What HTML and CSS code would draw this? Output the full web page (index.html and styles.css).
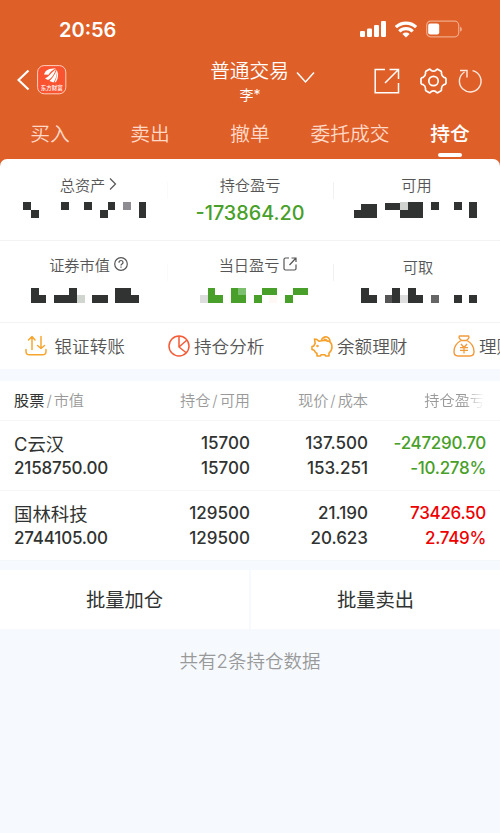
FILE: index.html
```
<!DOCTYPE html>
<html lang="zh-CN">
<head>
<meta charset="utf-8">
<title>普通交易</title>
<link rel="stylesheet" href="styles.css">
</head>
<body>
<div class="header">
    <div class="status">
        <span class="time">20:56</span>
        <div class="status-icons">
            <svg width="27" height="18" viewBox="0 0 27 18" fill="#fff">
                <rect x="0" y="11" width="5" height="6" rx="1.2"/>
                <rect x="7" y="8.500" width="5" height="8.500" rx="1.200"/>
                <rect x="14" y="5" width="5" height="12" rx="1.200"/>
                <rect x="21" y="1" width="5" height="16" rx="1.200"/>
            </svg>
            <svg width="24" height="18" viewBox="1 0 24 18" fill="none" stroke="#fff" stroke-width="3.200">
                <path d="M1.900 7.200a14.800 14.800 0 0 1 20.200 0M5.300 11.300a9.600 9.600 0 0 1 13.400 0"/>
                <path d="M8.400 13.900a5.200 5.200 0 0 1 7.200 0L12 17.400z" fill="#fff" stroke="none"/>
            </svg>
            <svg width="37" height="18" viewBox="0 0 37 18">
                <rect x=".7" y="1.200" width="32" height="15.600" rx="4" fill="none" stroke="#f0a987" stroke-width="1.200"/>
                <rect x="2.200" y="3.500" width="11" height="11" rx="2" fill="#fff"/>
                <path d="M34 6.500q2 1 2 2.700t-2 2.600z" fill="#f0a987"/>
            </svg>
        </div>
    </div>
    <div class="navbar">
        <div class="nav-left">
            <svg width="13" height="22" viewBox="0 0 13 22" fill="none" stroke="#fff" stroke-width="2.200"><path d="M11.500 1.500L1.500 11l10 9.500"/></svg>
            <svg class="logo" width="30" height="30" viewBox="0 0 30 30">
                <rect x=".6" y=".6" width="28.200" height="28.200" rx="6.500" fill="#fa5330" stroke="#ffd0bd" stroke-width="1"/>
                <path d="M7 9.500C8.500 5 12 3.500 19 3.300 16 4.500 13 7 11.500 9.800zM8 13.500c3.500-1.500 6-5.500 11-9.500-1.500 4.500-4 9.500-8 11zM12.500 16c3.500-3 5.500-7 7.500-11.500.2 5-1 9.500-3.500 13zM17.500 17.500c2.200-4 2.700-8 3-12 1.300 4 .5 8.500-1.500 11.500z" fill="#fff"/>
                <text x="14.700" y="25" text-anchor="middle" textLength="22" class="logo-text">东方财富</text>
            </svg>
        </div>
        <div class="nav-title">
            <div class="title">普通交易
                <svg width="19" height="13" viewBox="0 0 19 13" fill="none" stroke="#fff" stroke-width="1.500"><path d="M1 1.500l8.500 9.500L18 1.500"/></svg>
            </div>
            <div class="user">李*</div>
        </div>
        <div class="nav-right">
            <svg width="26" height="26" viewBox="0 0 26 26" fill="none" stroke="#fff" stroke-width="1.500"><path d="M11 1.500H1.200v23.300h23.300V15M15.500 1.500h9V11M24.500 1.500L11 15"/></svg>
            <svg width="27" height="26" viewBox="0 0 27 26" fill="none" stroke="#fff" stroke-width="1.700" stroke-linejoin="round">
                <path d="M9.400 1.200q1.200 0 1.800 1.200 2.300 1.400 4.600 0 .6-1.200 1.800-1.200l3.500 2q.8 1 .3 2 .2 3 2.600 4.200 1.600 0 2 1.300v4.600q-.4 1.300-2 1.300-2.400 1.200-2.600 4.200.5 1-.3 2l-3.500 2q-1.200 0-1.800-1.200-2.300-1.400-4.600 0-.6 1.200-1.800 1.200l-3.500-2q-.8-1-.3-2-.2-3-2.600-4.200-1.600 0-2-1.300v-4.600q.4-1.300 2-1.300 2.400-1.200 2.600-4.200-.5-1 .3-2z"/>
                <circle cx="13.500" cy="13" r="4.700"/>
            </svg>
            <svg width="24" height="25" viewBox="0 0 24 25" fill="none" stroke="#ffe9df" stroke-width="1.400"><path d="M14.500 2.600A10.800 10.800 0 1 1 6.500 4M2 2.500h7v7"/></svg>
        </div>
    </div>
    <div class="tabs">
        <div class="tab">买入</div>
        <div class="tab">卖出</div>
        <div class="tab">撤单</div>
        <div class="tab">委托成交</div>
        <div class="tab active">持仓</div>
    </div>
</div>

<div class="summary-wrap">
    <div class="summary">
        <div class="cell">
            <div class="label shift">总资产<svg width="8" height="14" viewBox="0 0 8 14" fill="none" stroke="#555" stroke-width="1.200"><path d="M1 1.500L6.500 7 1 12.500"/></svg></div>
            <svg class="mask" width="167" height="16" viewBox="0 0 167 16"><path d="M23 0h8v8h8v8h-8V8h-8zM61 0h8v8h-8zM84 0h8v8h-8zM108 0h7v8h-7v8h-8V8h8zM139 0h7v16h-7z"/><path fill="#8e8c90" d="M123 0h8v8h-8z"/></svg>
        </div>
        <div class="cell">
            <div class="label">持仓盈亏</div>
            <div class="amount">-173864.20</div>
        </div>
        <div class="cell">
            <div class="label">可用</div>
            <svg class="mask" width="167" height="16" viewBox="333 0 167 16"><path d="M361 2h16v14h-23V8h7zM385 1h15v7h8V0h15v16h-23V8h-15zM431 0h8v8h-8zM454 0h8v8h-8zM469 0h8v16h-8z"/><path fill="#d0d2d0" d="M400 0h8v8h-8z"/></svg>
        </div>
    </div>
    <div class="summary second">
        <div class="cell">
            <div class="label shift">证券市值<svg width="14" height="14" viewBox="0 0 14 14" fill="none" stroke="#555" stroke-width="1.200"><circle cx="7" cy="7" r="6.300"/><path d="M5 5.700q0-2.200 2-2.200t2 1.900q0 1-1 1.600-1 .6-1 1.400M7 9.500v1.200"/></svg></div>
            <svg class="mask" width="167" height="15" viewBox="0 0 167 15"><path d="M31 0h8v7h7v8H31zM54 7h15V0h8v15H54zM92 7h16v8H92zM115 0h16v7h8v8h-24z"/><path fill="#d0d5d0" d="M77 7h8v8h-8z"/></svg>
        </div>
        <div class="cell">
            <div class="label shift-more">当日盈亏<svg width="14" height="14" viewBox="0 0 14 14" fill="none" stroke="#555" stroke-width="1.200"><path d="M6 1H2.500Q1 1 1 2.500v9Q1 13 2.500 13h9q1.500 0 1.500-1.500V7.500M8.500 1H13v4M13 1L6.500 8"/></svg></div>
            <svg class="mask green" width="166" height="15" viewBox="167 0 166 15"><path d="M208 0h7v7h8v8h-15zM231 0h7v7h8v8h-15zM254 7h8V0h15v7h-15v8h-8zM285 7h8V0h15v7h-15v8h-8z"/><path fill="#7bbf6f" d="M238 0h8v7h-8z"/><path fill="#ddd" d="M200 7h8v8h-8z"/><path fill="#fff8f4" d="M269 7h8v8h-8z"/></svg>
        </div>
        <div class="cell">
            <div class="label low">可取</div>
            <svg class="mask" width="167" height="15" viewBox="333 0 167 15"><path d="M361 0h8v7h8v8h-16zM392 0h8v15h-8zM408 0h8v7h7v8h-15zM454 7h8v8h-8zM469 7h8v8h-8z"/><path fill="#555" d="M385 7h7v8h-7z"/><path fill="#666" d="M431 7h8v8h-8z"/><path fill="#dedede" d="M400 7h8v8h-8z"/></svg>
        </div>
    </div>
</div>

<div class="quick">
    <div class="quick-item">
        <svg width="22" height="22" viewBox="0 0 22 22" fill="none" stroke="#f6a62f" stroke-width="1.500" stroke-linecap="round" stroke-linejoin="round"><path d="M1 14.500v2q0 3.300 3.500 3.300h13q3.500 0 3.500-3.300v-2M7 14.500V1.500M3.500 5L7 1.500 10 5M16 1.500v12M12.500 10.500l3.500 3 3.500-3"/></svg>
        <span>银证转账</span>
    </div>
    <div class="quick-item">
        <svg width="22" height="22" viewBox="0 0 22 22" fill="none" stroke="#f45b36" stroke-width="1.500"><circle cx="11" cy="11" r="10"/><path d="M11 1v11l7.500 6M11 12l8-7"/></svg>
        <span>持仓分析</span>
    </div>
    <div class="quick-item">
        <svg width="22" height="22" viewBox="0 0 22 22" fill="none" stroke="#f6a02a" stroke-width="1.600" stroke-linejoin="round"><path d="M10.500 5a4.200 4.200 0 1 1 8.300 2.500M12.500 4.500q3-1 4 2.500M8 6.200Q6 4 3.500 4l.7 4.500Q3 10 2.800 11L1 11.500v3l2.200.8q1 2 2.800 3.200V21h3.500l.5-1.200h4l.5 1.200H18v-3q3-2.500 3-6 0-6.500-7-6.500-4 0-6 .7z"/><circle cx="6.500" cy="11" r=".5"/></svg>
        <span>余额理财</span>
    </div>
    <div class="quick-item">
        <svg width="22" height="22" viewBox="0 0 22 22" fill="none" stroke="#f29a3c" stroke-width="1.400" stroke-linejoin="round"><path d="M6.500 1h9q1 1.500 0 2.500l-2 2h-5l-2-2Q5.500 2.500 6.500 1zM8 5.500C3.500 8 1 12 1 16.500 1 20 2.500 21 5 21h12c2.500 0 4-1 4-4.500 0-4.500-2.500-8.500-7-11"/><path stroke-width="1.300" d="M8 9l3 3.500L14 9M11 12.500v6M7 12.700h8M7 15.300h8"/></svg>
        <span>理财</span>
    </div>
</div>

<div class="holdings">
    <div class="row head">
        <div class="col"><b>股票</b><i>/</i>市值</div>
        <div class="col">持仓<i>/</i>可用</div>
        <div class="col">现价<i>/</i>成本</div>
        <div class="col fade">持仓盈亏</div>
    </div>
    <div class="row">
        <div class="col"><div class="name">C云汉</div><div>2158750.00</div></div>
        <div class="col"><div>15700</div><div>15700</div></div>
        <div class="col"><div>137.500</div><div>153.251</div></div>
        <div class="col down"><div>-247290.70</div><div>-10.278%</div></div>
    </div>
    <div class="row">
        <div class="col"><div class="name">国林科技</div><div>2744105.00</div></div>
        <div class="col"><div>129500</div><div>129500</div></div>
        <div class="col"><div>21.190</div><div>20.623</div></div>
        <div class="col up"><div>73426.50</div><div>2.749%</div></div>
    </div>
</div>

<div class="actions">
    <div class="action">批量加仓</div>
    <div class="action">批量卖出</div>
</div>
<div class="count">共有2条持仓数据</div>
</body>
</html>
```
FILE: styles.css
```
* {
  box-sizing: border-box;
}

body {
  margin: 0;
  width: 500px;
  height: 833px;
  overflow: hidden;
  background: #f6faff;
  color: #303331;
  font-family: Inter, "Noto Sans CJK SC", sans-serif;
}

svg {
  display: block;
  flex: none;
}

/* Orange header */
.header {
  height: 159px;
  background: #df5f29;
  color: #fff;
}

.status {
  display: flex;
  justify-content: space-between;
  height: 60px;
  padding: 20px 37px 0 59px;
}

.time {
  font-size: 20px;
  line-height: 20px;
  font-weight: 600;
}

.status-icons {
  display: flex;
  gap: 7.5px;
}

.navbar {
  display: grid;
  grid-template-columns: 150px 1fr 150px;
  height: 50px;
}

.nav-left {
  display: flex;
  align-items: center;
  gap: 7px;
  height: 40px;
  padding-left: 17px;
}

.logo-text {
  font-size: 5.5px;
  font-weight: 500;
  fill: #fff;
}

.nav-title {
  margin-top: -2px;
  text-align: center;
}

.title {
  display: flex;
  justify-content: center;
  align-items: center;
  gap: 7px;
  height: 26px;
  padding-left: 25px;
  font-size: 19.7px;
  line-height: 24px;
  font-weight: 350;
}

.title svg {
  margin-top: 13px;
}

.user {
  font-size: 14px;
  line-height: 22px;
}

.nav-right {
  display: flex;
  align-items: center;
  justify-content: flex-end;
  height: 41px;
  padding-right: 18px;
}

.nav-right svg:nth-child(2) {
  margin: 0 11px 0 20px;
}

.tabs {
  display: grid;
  grid-template-columns: repeat(5, 100px);
  height: 49px;
}

.tab {
  display: flex;
  flex-direction: column;
  align-items: center;
  color: #ffd9c7;
  font-size: 19.8px;
  line-height: 48px;
  font-weight: 350;
}

.tab.active {
  color: #fff;
  font-weight: 500;
}

.tab.active::after {
  content: "";
  width: 24px;
  height: 4px;
  margin-top: -5px;
  border-radius: 2px;
  background: #fff;
}

/* Account summary */
.summary-wrap {
  background: #df5f29;
}

.summary {
  display: grid;
  grid-template-columns: 167px 166px 167px;
  height: 82px;
  background: #fff;
  border-bottom: 1px solid #f3f3f3;
  border-radius: 7px 7px 0 0;
}

.summary.second {
  border-radius: 0;
}

.cell {
  padding-top: 15px;
}

.cell + .cell {
  background: linear-gradient(#fafafa, #fafafa) 0 23px / 1px 17px no-repeat;
}

.cell:last-child {
  background-image: linear-gradient(#f1f1f1, #f1f1f1);
}

.second .cell {
  padding-top: 13px;
}

.label {
  display: flex;
  align-items: center;
  justify-content: center;
  gap: 4px;
  height: 23px;
  padding-bottom: 4px;
  color: #555;
  font-size: 15.2px;
  font-weight: 350;
}

.label.shift {
  padding-left: 10px;
}

.label.shift-more {
  padding-left: 16px;
}

.label.low {
  padding: 0 0 0 3px;
}

.mask {
  margin-top: 5px;
  fill: #303331;
  shape-rendering: crispEdges;
}

.second .mask {
  margin-top: 11px;
}

.mask.green {
  fill: #489f29;
}

.amount {
  color: #489f29;
  font-size: 19.8px;
  line-height: 32px;
  font-weight: 500;
  text-align: center;
}

/* Shortcuts, cut off at the right edge */
.quick {
  display: flex;
  height: 46px;
  padding-left: 25px;
  background: #fff;
  overflow: hidden;
}

.quick-item {
  display: flex;
  flex: none;
  align-items: center;
  gap: 4px;
  width: 143px;
  color: #555;
  font-size: 17.6px;
  font-weight: 350;
  white-space: nowrap;
}

.quick-item span {
  padding-bottom: 2px;
}

.quick-item:first-child {
  gap: 7.5px;
}

.quick-item:last-child {
  margin-left: -1px;
}

/* Holdings */
.holdings {
  margin-top: 12px;
}

.row {
  display: grid;
  grid-template-columns: 131px 105px 118px 118px;
  height: 70px;
  padding: 10px 14px 0 14px;
  background: #fff;
  border-bottom: 1px solid #f5f6f8;
  font-size: 17px;
  line-height: 24.5px;
  font-weight: 500;
}

.col {
  text-align: right;
}

.col:first-child {
  text-align: left;
  letter-spacing: -0.2px;
}

.col:last-child {
  letter-spacing: -0.3px;
}

.col > div {
  height: 24.5px;
}

.col > .name {
  padding-top: 1px;
  font-size: 18.4px;
  font-weight: 400;
  letter-spacing: 0;
}

.row.head {
  height: 40px;
  padding-top: 8px;
  color: #999;
  font-size: 15.2px;
  line-height: 24px;
  font-weight: 350;
}

.row.head .col {
  letter-spacing: 0;
}

.head b {
  color: #303331;
  font-weight: 400;
}

.head i {
  padding: 0 2px;
  font-style: normal;
}

.head .fade {
  padding-right: 1px;
}

.fade {
  -webkit-mask-image: linear-gradient(to right, #000 96px, transparent 116px);
  mask-image: linear-gradient(to right, #000 96px, transparent 116px);
}

.down {
  color: #489f29;
}

.up {
  color: #ee0000;
}

.actions {
  display: grid;
  grid-template-columns: 1fr 1fr;
  gap: 2px;
  margin-top: 9px;
}

.action {
  height: 59px;
  background: #fff;
  font-size: 19.3px;
  line-height: 61px;
  text-align: center;
}

.count {
  color: #999;
  font-size: 18.5px;
  line-height: 65px;
  font-weight: 350;
  text-align: center;
}
```
